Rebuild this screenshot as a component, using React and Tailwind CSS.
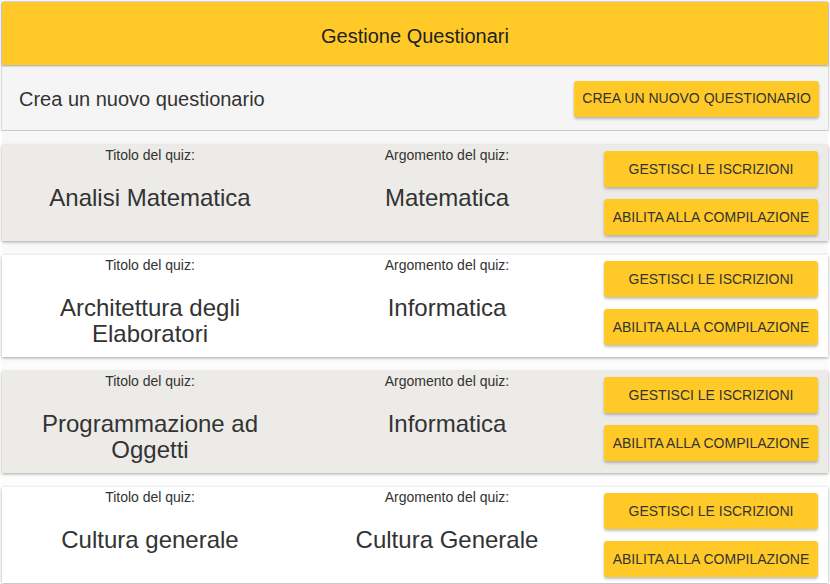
const quizzes = [
  { title: "Analisi Matematica", topic: "Matematica", bg: "bg-[#ecebe7]" },
  { title: "Architettura degli Elaboratori", topic: "Informatica", bg: "bg-white" },
  { title: "Programmazione ad Oggetti", topic: "Informatica", bg: "bg-[#ecebe7]" },
  { title: "Cultura generale", topic: "Cultura Generale", bg: "bg-white" },
];

function YellowButton({ children, className = "" }) {
  return (
    <button
      className={`h-[36px] rounded-[3px] bg-[#ffca28] text-[14px] uppercase text-[#333] shadow-[0_2px_3px_rgba(0,0,0,0.25)] ${className}`}
    >
      {children}
    </button>
  );
}

function QuizCard({ quiz }) {
  return (
    <div className={`flex ${quiz.bg} shadow-[0_1px_3px_rgba(0,0,0,0.35)]`}>
      <div className="w-[296px] pt-[2px] pb-[10px] text-center">
        <p className="text-[14px] leading-[17px] text-[#333]">Titolo del quiz:</p>
        <p className="mt-[21px] px-[20px] text-[24px] leading-[26px] text-[#333]">{quiz.title}</p>
      </div>
      <div className="w-[298px] pt-[2px] pb-[10px] text-center">
        <p className="text-[14px] leading-[17px] text-[#333]">Argomento del quiz:</p>
        <p className="mt-[21px] text-[24px] leading-[26px] text-[#333]">{quiz.topic}</p>
      </div>
      <div className="flex flex-col gap-[12px] py-[6px] pl-[8px]">
        <YellowButton className="w-[214px]">Gestisci le iscrizioni</YellowButton>
        <YellowButton className="w-[214px]">Abilita alla compilazione</YellowButton>
      </div>
    </div>
  );
}

export default function App() {
  return (
    <div className="min-h-[584px] bg-white font-['Liberation_Sans',Arial,sans-serif]">
      <div className="mx-[2px] pt-[2px]">
        <div className="shadow-[0_0_2px_rgba(0,0,0,0.45)]">
          <div className="relative flex h-[63px] items-center justify-center bg-[#ffca28] pt-[4px] text-[20px] text-[#222] shadow-[0_1px_2px_rgba(0,0,0,0.35)]">
            Gestione Questionari
          </div>
          <div className="flex h-[66px] items-center justify-between border-b border-[#c8c8c8] bg-[#f5f5f5] pl-[17px] pr-[9px] pt-[2px]">
            <span className="text-[20px] text-[#333]">Crea un nuovo questionario</span>
            <YellowButton className="px-[8px]">Crea un nuovo questionario</YellowButton>
          </div>
        </div>
        <div className="flex flex-col gap-[14px] bg-gradient-to-b from-[#f7f7f7] to-white pt-[14px]">
          {quizzes.map((q) => (
            <QuizCard key={q.title} quiz={q} />
          ))}
        </div>
      </div>
    </div>
  );
}
